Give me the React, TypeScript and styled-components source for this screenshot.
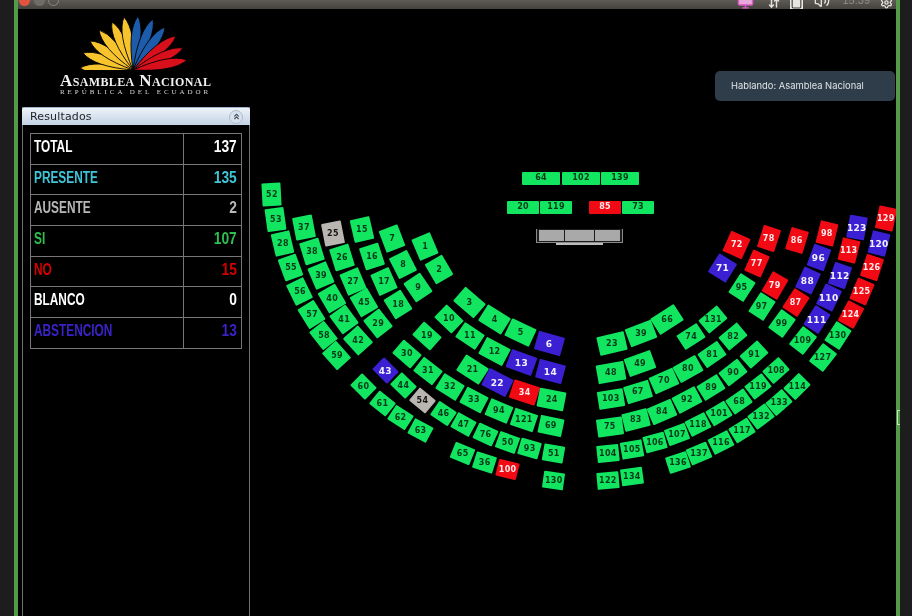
import React from 'react';
import styled, { createGlobalStyle } from 'styled-components';
import { Monitor, ArrowDownUp, Clipboard, Volume2, Settings, ChevronsUp } from 'lucide-react';

type Status = 'si' | 'no' | 'abs' | 'aus';
// label, centre x, centre y, rotation, status (default si). Coordinates are page pixels.
type SeatRow = [string, number, number, number, Status?];
type SeatGroup = { w: number; h: number; seats: SeatRow[] };

const STAGE_X = 250;
const STAGE_Y = 9;

const SEAT_GROUPS: SeatGroup[] = [
  {
    w: 19,
    h: 23,
    seats: [
      ['52', 271, 194, -3],
      ['53', 275, 219, -8],
      ['28', 282, 243, -13],
      ['55', 290, 267, -20],
      ['56', 299, 291, -26],
      ['57', 311, 314, -32],
      ['58', 323, 335, -38],
      ['59', 336, 355, -42],
    ],
  },
  {
    w: 20,
    h: 23,
    seats: [
      ['37', 304, 227, -11],
      ['38', 312, 251, -17],
      ['39', 321, 275, -23],
      ['40', 332, 298, -30],
      ['41', 344, 319, -36],
      ['42', 358, 340, -42],
      ['25', 333, 233, -11, 'aus'],
      ['26', 342, 257, -17],
      ['27', 353, 281, -23],
      ['45', 364, 302, -30],
      ['29', 378, 323, -38],
      ['15', 362, 229, -13],
      ['16', 372, 256, -18],
      ['17', 384, 281, -24],
      ['18', 398, 304, -32],
      ['7', 392, 238, -21],
      ['8', 403, 264, -27],
      ['9', 418, 287, -34],
      ['1', 425, 246, -23],
      ['2', 439, 269, -30],
    ],
  },
  {
    w: 27,
    h: 19,
    seats: [
      ['3', 469, 302, 41],
      ['4', 494, 319, 32],
      ['5', 520, 332, 25],
      ['6', 549, 343, 16, 'abs'],
      ['13', 521, 362, 20, 'abs'],
      ['14', 550, 371, 15, 'abs'],
      ['12', 494, 351, 28],
      ['21', 472, 369, 33],
      ['22', 497, 382, 27, 'abs'],
      ['34', 524, 392, 18, 'no'],
      ['24', 551, 399, 11],
    ],
  },
  {
    w: 24,
    h: 18,
    seats: [
      ['10', 449, 319, 44],
      ['11', 470, 336, 34],
      ['19', 427, 336, 42],
      ['30', 407, 354, 41],
      ['31', 428, 371, 38],
      ['32', 450, 387, 32],
      ['33', 474, 400, 28],
      ['94', 499, 411, 23],
      ['121', 524, 420, 19],
      ['69', 551, 426, 12],
    ],
  },
  {
    w: 21,
    h: 17,
    seats: [
      ['43', 385, 370, 45, 'abs'],
      ['44', 403, 385, 44],
      ['54', 422, 400, 40, 'aus'],
      ['46', 443, 413, 34],
      ['47', 463, 424, 29],
      ['76', 485, 434, 25],
      ['50', 507, 442, 20],
      ['93', 529, 448, 16],
      ['51', 553, 453, 10],
      ['60', 363, 386, 45],
      ['61', 382, 403, 39],
      ['62', 400, 417, 33],
      ['63', 420, 430, 28],
      ['65', 462, 453, 22],
      ['36', 484, 462, 18],
      ['100', 507, 469, 14, 'no'],
      ['130', 553, 480, 8],
    ],
  },
  {
    w: 28,
    h: 19,
    seats: [
      ['23', 612, 343, -13],
      ['39', 641, 333, -21],
      ['66', 667, 319, -33],
      ['48', 611, 372, -10],
      ['49', 640, 363, -20],
    ],
  },
  {
    w: 26,
    h: 18,
    seats: [
      ['103', 611, 399, -9],
      ['67', 638, 392, -17],
      ['70', 664, 381, -24],
      ['80', 688, 369, -29],
      ['75', 610, 427, -8],
      ['83', 636, 420, -14],
      ['84', 662, 412, -23],
      ['92', 687, 400, -28],
    ],
  },
  {
    w: 24,
    h: 17,
    seats: [
      ['74', 691, 336, -33],
      ['131', 713, 319, -40],
      ['81', 712, 354, -35],
      ['82', 733, 336, -40],
      ['89', 711, 387, -32],
      ['90', 733, 372, -38],
      ['91', 754, 354, -42],
    ],
  },
  {
    w: 22,
    h: 17,
    seats: [
      ['104', 608, 453, -6],
      ['105', 632, 449, -10],
      ['106', 655, 442, -15],
      ['107', 677, 434, -20],
      ['118', 698, 424, -27],
      ['101', 719, 413, -31],
      ['68', 739, 401, -35],
      ['119', 758, 386, -38],
      ['108', 776, 370, -42],
      ['122', 608, 480, -5],
      ['134', 632, 476, -8],
      ['136', 678, 462, -18],
      ['137', 699, 453, -23],
      ['116', 721, 442, -27],
      ['117', 742, 430, -32],
      ['132', 761, 416, -37],
      ['133', 779, 402, -41],
      ['114', 797, 386, -45],
    ],
  },
  {
    w: 21,
    h: 22,
    seats: [
      ['72', 736, 245, 24, 'no'],
      ['71', 722, 268, 32, 'abs'],
    ],
  },
  {
    w: 18,
    h: 23,
    seats: [
      ['78', 769, 238, 18, 'no'],
      ['77', 757, 263, 24, 'no'],
      ['95', 742, 287, 33],
      ['86', 797, 240, 17, 'no'],
      ['79', 775, 285, 30, 'no'],
      ['97', 762, 306, 33],
      ['87', 796, 302, 33, 'no'],
      ['99', 782, 323, 36],
      ['98', 827, 233, 14, 'no'],
      ['96', 819, 257, 20, 'abs'],
      ['88', 808, 280, 25, 'abs'],
      ['111', 817, 319, 33, 'abs'],
      ['109', 803, 340, 38],
      ['123', 857, 227, 10, 'abs'],
      ['113', 849, 250, 14, 'no'],
      ['112', 840, 275, 19, 'abs'],
      ['110', 829, 297, 26, 'abs'],
      ['129', 886, 218, 12, 'no'],
      ['120', 879, 243, 14, 'abs'],
      ['126', 872, 267, 18, 'no'],
      ['125', 862, 291, 23, 'no'],
      ['124', 851, 314, 28, 'no'],
      ['130', 838, 335, 33],
      ['127', 823, 357, 38],
    ],
  },
  {
    w: 38,
    h: 13,
    seats: [
      ['64', 541, 178, 0],
      ['102', 581, 178, 0],
      ['139', 620, 178, 0],
    ],
  },
  {
    w: 32,
    h: 13,
    seats: [
      ['20', 523, 207, 0],
      ['119', 556, 207, 0],
      ['85', 605, 207, 0, 'no'],
      ['73', 638, 207, 0],
    ],
  },
];

const RESULTS = [
  { label: 'TOTAL', value: 137, color: '#ffffff' },
  { label: 'PRESENTE', value: 135, color: '#3ec6d8' },
  { label: 'AUSENTE', value: 2, color: '#b8b8b8' },
  { label: 'SI', value: 107, color: '#2fbf4c' },
  { label: 'NO', value: 15, color: '#d60000' },
  { label: 'BLANCO', value: 0, color: '#ffffff' },
  { label: 'ABSTENCION', value: 13, color: '#3a22c8' },
];

const LOGO_BASE = { x: 133, y: 70 };
const LOGO_PETALS = [
  { x: 80, y: 68, color: '#f8c42e' },
  { x: 83, y: 53, color: '#f8c42e' },
  { x: 90, y: 41, color: '#f8c42e' },
  { x: 99, y: 30, color: '#f8c42e' },
  { x: 112, y: 22, color: '#f8c42e' },
  { x: 124, y: 17, color: '#f8c42e' },
  { x: 138, y: 16, color: '#1c5cab' },
  { x: 153, y: 19, color: '#1c5cab' },
  { x: 165, y: 27, color: '#1c5cab' },
  { x: 176, y: 36, color: '#d8101c' },
  { x: 183, y: 48, color: '#d8101c' },
  { x: 187, y: 60, color: '#d8101c' },
];

const petalPath = (tx: number, ty: number) => {
  const { x, y } = LOGO_BASE;
  const dx = tx - x;
  const dy = ty - y;
  const len = Math.hypot(dx, dy);
  const nx = -dy / len;
  const ny = dx / len;
  const bulge = 9.5;
  const mx = x + dx * 0.72;
  const my = y + dy * 0.72;
  return `M${x} ${y}Q${mx + nx * bulge} ${my + ny * bulge} ${tx} ${ty}Q${mx - nx * bulge} ${my - ny * bulge} ${x} ${y}Z`;
};

const GlobalStyle = createGlobalStyle`
  html, body {
    margin: 0;
    padding: 0;
    background: #1d1d1d;
  }
`;

const Page = styled.div`
  width: 912px;
  height: 616px;
  overflow: hidden;
  padding-left: 14px;
  box-sizing: border-box;
  background: #1d1d1d;
`;

const Window = styled.div`
  position: relative;
  width: 886px;
  height: 616px;
  box-sizing: border-box;
  border-left: 4px solid #559a49;
  border-right: 4px solid #559a49;
  background: #000;
  display: flex;
  flex-direction: column;
  filter: blur(0.5px);
`;

const TopBar = styled.div`
  height: 9px;
  flex: none;
  overflow: hidden;
  display: flex;
  align-items: flex-end;
  background: linear-gradient(#5d5a54, #45433e);
`;

const WindowDot = styled.span<{ $color: string; $outline?: boolean; $gap: number }>`
  flex: none;
  width: 11px;
  height: 11px;
  margin-left: ${p => p.$gap}px;
  margin-bottom: 3px;
  box-sizing: border-box;
  border-radius: 50%;
  background: ${p => p.$color};
  border: ${p => (p.$outline ? '1px solid #8a8780' : 'none')};
`;

const Tray = styled.div`
  margin-left: auto;
  display: flex;
  align-items: flex-end;
  height: 9px;
  padding-right: 3px;
`;

const TrayItem = styled.span<{ $gap: number; $color?: string; $bg?: string; $lift?: number }>`
  display: flex;
  margin-left: ${p => p.$gap}px;
  margin-bottom: ${p => p.$lift ?? 0}px;
  color: ${p => p.$color ?? '#e4e2dc'};
  background: ${p => p.$bg ?? 'transparent'};
`;

const Clock = styled.span`
  margin-left: 12px;
  font: 11px/11px 'Liberation Sans', sans-serif;
  color: #8f8d88;
  transform: translateY(-3px);
`;

const Body = styled.div`
  flex: 1;
  min-height: 0;
  display: flex;
`;

const Sidebar = styled.aside`
  flex: none;
  width: 232px;
  box-sizing: border-box;
  padding-left: 4px;
  display: flex;
  flex-direction: column;
`;

const LogoBlock = styled.div`
  flex: none;
  height: 98px;
  box-sizing: border-box;
  padding: 3px 0 0 38px;
  white-space: nowrap;
`;

const LogoMark = styled.svg`
  display: block;
  margin-left: 18px;
`;

const LogoTitle = styled.div`
  margin-top: 3px;
  font: bold 17px/15px 'Liberation Serif', serif;
  font-variant: small-caps;
  letter-spacing: 0.38px;
  color: #f1f1f1;
`;

const LogoSubtitle = styled.div`
  margin-top: 1px;
  font: 7px/7px 'Liberation Serif', serif;
  letter-spacing: 2.95px;
  color: #d8d8d8;
`;

const Panel = styled.section`
  flex: 1;
  box-sizing: border-box;
  width: 228px;
  border-left: 1px solid #6c7278;
  border-right: 1px solid #6c7278;
`;

const PanelHeader = styled.header`
  height: 18px;
  margin: 0 -1px;
  box-sizing: border-box;
  padding: 0 7px 0 8px;
  display: flex;
  align-items: center;
  justify-content: space-between;
  border-radius: 2px 2px 0 0;
  border-top: 1px solid #9db2cf;
  background: linear-gradient(#eef3f9, #c3d2e4);
  font: 11px/14px 'DejaVu Sans', sans-serif;
  letter-spacing: 0.15px;
  color: #1e2023;
`;

const CollapseButton = styled.span`
  width: 12px;
  height: 12px;
  border-radius: 50%;
  border: 1px solid #aebccb;
  background: #d8e2ee;
  display: flex;
  align-items: center;
  justify-content: center;
  color: #4a5158;
`;

const ResultsTable = styled.table`
  margin: 8px 0 0 7px;
  width: 212px;
  table-layout: fixed;
  border-collapse: collapse;
`;

const Row = styled.tr`
  height: 30.7px;
`;

const Cell = styled.td<{ $value?: boolean; $color: string }>`
  padding: 0 0 4px;
  border: 1px solid #777;
  width: ${p => (p.$value ? '57px' : 'auto')};
  overflow: hidden;
  text-align: ${p => (p.$value ? 'right' : 'left')};
  color: ${p => p.$color};
  font: bold 16px/20px 'Liberation Sans', sans-serif;
`;

const Squeezed = styled.span<{ $value?: boolean }>`
  display: inline-block;
  white-space: nowrap;
  transform-origin: ${p => (p.$value ? 'right' : 'left')} center;
  transform: scaleX(${p => (p.$value ? 0.86 : 0.74)});
  margin: ${p => (p.$value ? '0 4px 0 0' : '0 0 0 3px')};
`;

const Stage = styled.main`
  position: relative;
  flex: 1;
  overflow: hidden;
`;

const STATUS_COLORS: Record<Status, { bg: string; fg: string }> = {
  si: { bg: '#12e661', fg: '#07391a' },
  no: { bg: '#f10a14', fg: '#ffe9e9' },
  abs: { bg: '#3a20d2', fg: '#f2f2ff' },
  aus: { bg: '#b9b6b2', fg: '#141414' },
};

const SeatBox = styled.div<{ $status: Status }>`
  position: absolute;
  box-sizing: border-box;
  display: flex;
  align-items: center;
  justify-content: center;
  border-radius: 1px;
  background: ${p => STATUS_COLORS[p.$status].bg};
  color: ${p => STATUS_COLORS[p.$status].fg};
  font: bold ${p => (p.$status === 'abs' ? 9 : 8)}px/10px 'DejaVu Sans', sans-serif;
  letter-spacing: 0.3px;
`;

const SeatLabel = styled.span`
  display: block;
`;

const Podium = styled.div`
  position: absolute;
  left: 286px;
  top: 220px;
  width: 87px;
  height: 14px;
  box-sizing: border-box;
  padding: 1px 2px;
  display: flex;
  gap: 1px;
  border: 1px solid #8a8a8a;
  border-top: none;
  background: #1c1c1c;
`;

const PodiumBlock = styled.span<{ $width: number }>`
  flex: none;
  width: ${p => p.$width}px;
  background: #a9a9a9;
`;

const PodiumStep = styled.div`
  position: absolute;
  left: 306px;
  top: 234px;
  width: 47px;
  height: 2px;
  background: #bdbdbd;
`;

const Toast = styled.div`
  position: absolute;
  right: 1px;
  top: 62px;
  width: 180px;
  height: 30px;
  box-sizing: border-box;
  padding-left: 16px;
  display: flex;
  align-items: center;
  border-radius: 5px;
  background: #2e3d49;
  color: #dfe3e6;
  font: 9.4px/12px 'Inter', 'DejaVu Sans', sans-serif;
`;

const ResizeHandle = styled.span`
  position: absolute;
  right: -4px;
  top: 410px;
  width: 2px;
  height: 13px;
  border: 1px solid #c4e0bc;
  border-right: none;
`;

const Seat = ({ seat, w, h }: { seat: SeatRow; w: number; h: number }) => {
  const [label, x, y, rotation, status = 'si'] = seat;
  return (
    <SeatBox
      $status={status}
      style={{
        left: x - STAGE_X - w / 2,
        top: y - STAGE_Y - h / 2,
        width: w,
        height: h,
        transform: `rotate(${rotation}deg)`,
      }}
    >
      {/* the numbers stay level even though the tile is turned */}
      <SeatLabel style={{ transform: `rotate(${-rotation}deg)` }}>{label}</SeatLabel>
    </SeatBox>
  );
};

const Logo = () => (
  <LogoBlock>
    <LogoMark width={112} height={58} viewBox='78 12 112 58'>
      {LOGO_PETALS.map(p => (
        <path key={`${p.x}-${p.y}`} d={petalPath(p.x, p.y)} fill={p.color} stroke='#000' strokeWidth={0.9} />
      ))}
    </LogoMark>
    <LogoTitle>Asamblea Nacional</LogoTitle>
    <LogoSubtitle>REPÚBLICA DEL ECUADOR</LogoSubtitle>
  </LogoBlock>
);

export default function App() {
  return (
    <Page>
      <GlobalStyle />
      <Window>
        <TopBar>
          <WindowDot $color='#e0533d' $gap={1} />
          <WindowDot $color='#6f6c66' $gap={4} />
          <WindowDot $color='transparent' $outline $gap={3} />
          <Tray>
            <TrayItem $gap={0} $color='#d65ac0' $lift={-1}>
              <Monitor size={17} fill='#e9a8dc' />
            </TrayItem>
            <TrayItem $gap={14}>
              <ArrowDownUp size={12} strokeWidth={3} />
            </TrayItem>
            <TrayItem $gap={10} $color='#3a3a3a' $bg='#e8e6e0'>
              <Clipboard size={13} />
            </TrayItem>
            <TrayItem $gap={11}>
              <Volume2 size={16} />
            </TrayItem>
            <Clock>15:39</Clock>
            <TrayItem $gap={10}>
              <Settings size={13} strokeWidth={2.5} />
            </TrayItem>
          </Tray>
        </TopBar>
        <Body>
          <Sidebar>
            <Logo />
            <Panel>
              <PanelHeader>
                Resultados
                <CollapseButton>
                  <ChevronsUp size={9} strokeWidth={3} />
                </CollapseButton>
              </PanelHeader>
              <ResultsTable>
                <tbody>
                  {RESULTS.map(r => (
                    <Row key={r.label}>
                      <Cell $color={r.color}>
                        <Squeezed>{r.label}</Squeezed>
                      </Cell>
                      <Cell $value $color={r.color}>
                        <Squeezed $value>{r.value}</Squeezed>
                      </Cell>
                    </Row>
                  ))}
                </tbody>
              </ResultsTable>
            </Panel>
          </Sidebar>
          <Stage>
            {SEAT_GROUPS.map(group =>
              group.seats.map(seat => (
                <Seat key={`${seat[0]}-${seat[1]}`} seat={seat} w={group.w} h={group.h} />
              ))
            )}
            <Podium>
              <PodiumBlock $width={25} />
              <PodiumBlock $width={29} />
              <PodiumBlock $width={25} />
            </Podium>
            <PodiumStep />
            <Toast>Hablando: Asamblea Nacional</Toast>
          </Stage>
        </Body>
        <ResizeHandle />
      </Window>
    </Page>
  );
}
